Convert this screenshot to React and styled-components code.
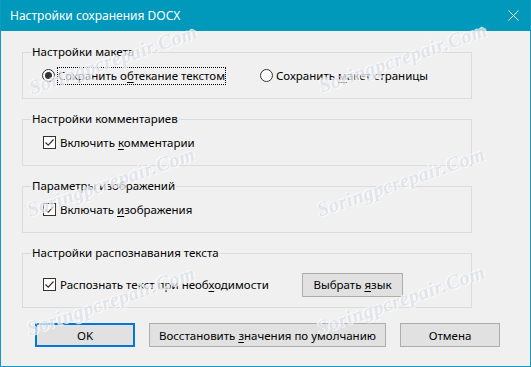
import React from "react";
import styled, { createGlobalStyle } from "styled-components";

const GlobalStyle = createGlobalStyle`
  html, body { margin: 0; padding: 0; background: #f0f0f0; }
  body { font-family: "Noto Sans", "Open Sans", "DejaVu Sans", sans-serif; }
`;

const Window = styled.div`
  position: relative;
  width: 531px;
  height: 367px;
  box-sizing: border-box;
  border: 1px solid #1798bd;
  border-top: none;
  background: #f0f0f0;
  display: flex;
  flex-direction: column;
  overflow: hidden;
  font-family: "Noto Sans", "Open Sans", sans-serif;
  font-size: 11.5px;
  color: #000;
`;

const TitleBar = styled.div`
  height: 31px;
  flex: none;
  background: #0099bc;
  color: #fff;
  display: flex;
  align-items: center;
  justify-content: space-between;
  padding: 0 8px 0 10px;
  margin: 0 -1px;
  font-size: 12px;
`;

const Title = styled.span`
  letter-spacing: 0;
`;

const CloseIcon = styled.svg`
  width: 11px;
  height: 11px;
  display: block;
  margin-right: 4px;
`;

const Body = styled.div`
  padding: 21px 0 0 21px;
  display: flex;
  flex-direction: column;
  gap: 20px;
`;

const Group = styled.div`
  position: relative;
  width: 450px;
  height: ${(p) => p.$h}px;
  box-sizing: border-box;
  border: 1px solid #dcdcdc;
  display: flex;
  align-items: center;
  padding: ${(p) => p.$pt}px 0 0 ${(p) => p.$pl}px;
`;

const Legend = styled.span`
  position: absolute;
  top: -10px;
  left: 8px;
  padding: 0 1px;
  background: #f0f0f0;
  line-height: 17px;
`;

const Option = styled.label`
  display: flex;
  align-items: center;
  width: ${(p) => (p.$w ? `${p.$w}px` : "auto")};
  flex: none;
  line-height: 15px;
`;

const RadioMark = styled.span`
  width: 13px;
  height: 13px;
  box-sizing: border-box;
  border: 1px solid #333;
  border-radius: 50%;
  background: #fff;
  display: flex;
  align-items: center;
  justify-content: center;
  margin-right: 2px;
  flex: none;
  &::after {
    content: "";
    display: ${(p) => (p.$checked ? "block" : "none")};
    width: 7px;
    height: 7px;
    border-radius: 50%;
    background: #333;
  }
`;

const CheckMark = styled.span`
  width: 13px;
  height: 13px;
  box-sizing: border-box;
  border: 1px solid #333;
  background: #fff;
  display: flex;
  align-items: center;
  justify-content: center;
  margin-right: 3px;
  flex: none;
`;

const OptText = styled.span`
  border: 1px dotted ${(p) => (p.$focus ? "#000" : "transparent")};
  padding: 0 0 1px 0;
`;

const U = styled.u`
  text-decoration: underline;
  text-underline-offset: 2px;
`;

const Button = styled.button`
  font: inherit;
  color: #000;
  width: ${(p) => p.$w}px;
  height: 24px;
  box-sizing: border-box;
  background: #e1e1e1;
  border: ${(p) => (p.$default ? "2px solid #0078d7" : "1px solid #adadad")};
  padding: 0;
  flex: none;
  cursor: default;
`;

const ButtonRow = styled.div`
  display: flex;
  gap: 14px;
  padding-left: 13px;
  margin-top: -5px;
`;

const Watermark = styled.div`
  position: absolute;
  left: ${(p) => p.$x}px;
  top: ${(p) => p.$y}px;
  transform: translate(-50%, -50%) rotate(-19deg);
  font-family: "Liberation Serif", "DejaVu Serif", serif;
  font-style: italic;
  font-weight: bold;
  font-size: 20px;
  color: #dde2ea;
  text-shadow: 0 0 1px #fff, 1px 1px 0 #fff, -1px -1px 0 #ffffff;
  white-space: nowrap;
  pointer-events: none;
  opacity: 0.8;
  letter-spacing: 0.5px;
`;

function Radio({ checked, children, w, focus }) {
  return (
    <Option $w={w}>
      <RadioMark $checked={checked} />
      <OptText $focus={focus}>{children}</OptText>
    </Option>
  );
}

function Check({ children, w }) {
  return (
    <Option $w={w}>
      <CheckMark>
        <svg width="11" height="11" viewBox="0 0 11 11">
          <path d="M1.5 5.5 L4.2 8.2 L9.5 2.5" fill="none" stroke="#333" strokeWidth="1.2" />
        </svg>
      </CheckMark>
      <OptText>{children}</OptText>
    </Option>
  );
}

const marks = [
  [112, 60],
  [402, 58],
  [110, 182],
  [400, 182],
  [110, 301],
  [400, 300],
];

export default function App() {
  return (
    <>
      <GlobalStyle />
      <Window>
        <TitleBar>
          <Title>Настройки сохранения DOCX</Title>
          <CloseIcon viewBox="0 0 11 11">
            <path d="M0.5 0.5 L10.5 10.5 M10.5 0.5 L0.5 10.5" stroke="#fff" strokeWidth="1" />
          </CloseIcon>
        </TitleBar>
        <Body>
          <Group $h={47} $pt={0} $pl={19}>
            <Legend>Настройки макета</Legend>
            <Radio checked w={218} focus>
              Сохранить о<U>б</U>текание текстом
            </Radio>
            <Radio>
              Сохранить <U>м</U>акет страницы
            </Radio>
          </Group>
          <Group $h={47} $pt={0} $pl={20}>
            <Legend>Настройки комментариев</Legend>
            <Check>
              Включить <U>к</U>омментарии
            </Check>
          </Group>
          <Group $h={47} $pt={0} $pl={20}>
            <Legend>Параметры изображений</Legend>
            <Check>
              Включать <U>и</U>зображения
            </Check>
          </Group>
          <Group $h={55} $pt={8} $pl={20}>
            <Legend>Настройки распознавания текста</Legend>
            <Check w={259}>
              Распознать текст при необ<U>х</U>одимости
            </Check>
            <Button $w={101}>
              Выбрать <U>я</U>зык
            </Button>
          </Group>
          <ButtonRow>
            <Button $w={100} $default>
              OK
            </Button>
            <Button $w={237}>
              Восстановить <U>з</U>начения по умолчанию
            </Button>
            <Button $w={100}>Отмена</Button>
          </ButtonRow>
        </Body>
        {marks.map(([x, y], i) => (
          <Watermark key={i} $x={x} $y={y}>
            Soringpcrepair.Com
          </Watermark>
        ))}
      </Window>
    </>
  );
}
